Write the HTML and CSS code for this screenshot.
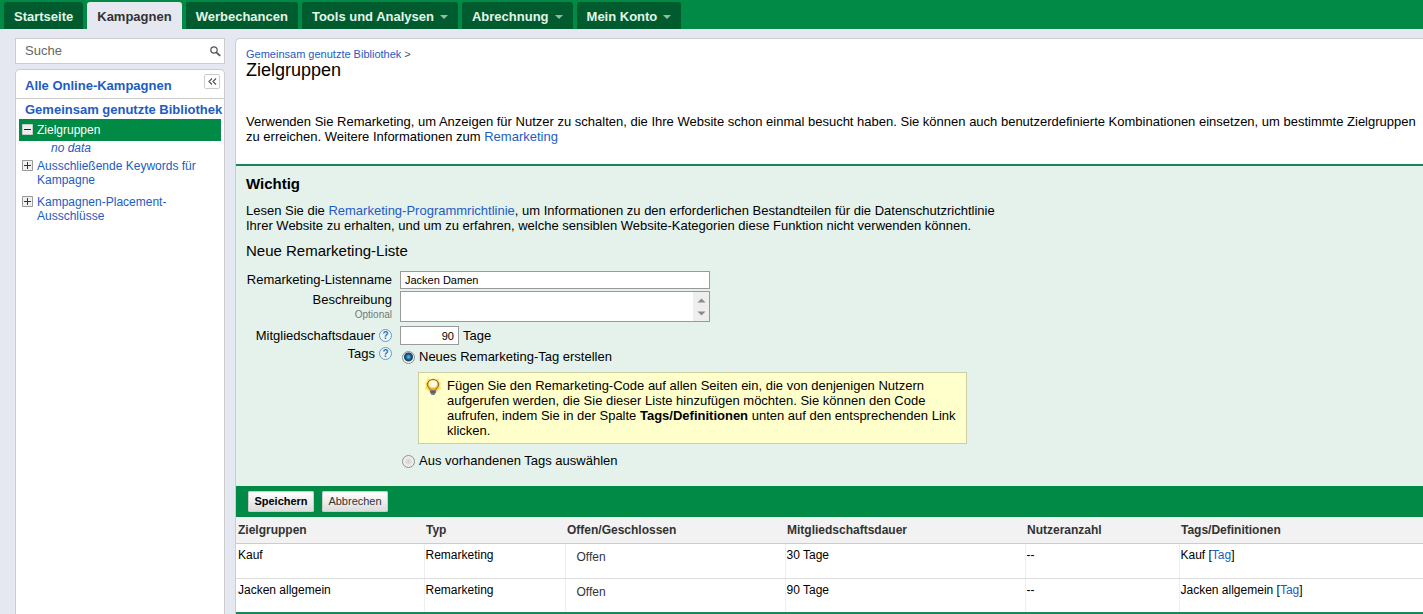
FILE: index.html
```
<!DOCTYPE html>
<html lang="de">
<head>
  <meta charset="UTF-8">
  <meta name="viewport" content="width=device-width, initial-scale=1.0">
  <title>Zielgruppen</title>
  <link rel="stylesheet" href="styles.css">
</head>
<body>
  <nav class="topnav">
    <a href="#" class="tab">Startseite</a>
    <a href="#" class="tab active">Kampagnen</a>
    <a href="#" class="tab">Werbechancen</a>
    <a href="#" class="tab menu">Tools und Analysen</a>
    <a href="#" class="tab menu">Abrechnung</a>
    <a href="#" class="tab menu">Mein Konto</a>
  </nav>

  <div class="page">
    <aside class="sidebar">
      <form class="search">
        <input type="text" placeholder="Suche" aria-label="Suche">
        <button type="button" aria-label="Suchen">
          <svg width="11" height="11" viewBox="0 0 11 11">
            <circle cx="4" cy="4" r="3.200" fill="none" stroke="#555" stroke-width="1.200"/>
            <path d="M6.300 6.300L10.200 9.800" stroke="#555" stroke-width="1.800"/>
          </svg>
        </button>
      </form>

      <div class="tree">
        <div class="tree-head">
          <a href="#">Alle Online-Kampagnen</a>
          <button type="button" class="collapse" aria-label="Einklappen">
            <svg width="9" height="7" viewBox="0 0 9 7">
              <path d="M4 0.500L1 3.500L4 6.500M8 0.500L5 3.500L8 6.500" fill="none" stroke="#555" stroke-width="1.200"/>
            </svg>
          </button>
        </div>
        <a href="#" class="tree-title">Gemeinsam genutzte Bibliothek</a>
        <ul>
          <li class="selected">
            <svg class="box" width="11" height="11" viewBox="0 0 11 11">
              <path d="M0.500 0.500H10.500V10.500H0.500Z" fill="#eee" stroke="#c4cfc8"/>
              <path d="M2 5.500H9" stroke="#222"/>
            </svg>
            <a href="#">Zielgruppen</a>
          </li>
          <li class="empty">no data</li>
          <li class="first">
            <svg class="box" width="11" height="11" viewBox="0 0 11 11">
              <path d="M0.500 0.500H10.500V10.500H0.500Z" fill="#f0f0f0" stroke="#999"/>
              <path d="M2 5.500H9M5.500 2V9" stroke="#333"/>
            </svg>
            <a href="#">Ausschließende Keywords für Kampagne</a>
          </li>
          <li>
            <svg class="box" width="11" height="11" viewBox="0 0 11 11">
              <path d="M0.500 0.500H10.500V10.500H0.500Z" fill="#f0f0f0" stroke="#999"/>
              <path d="M2 5.500H9M5.500 2V9" stroke="#333"/>
            </svg>
            <a href="#">Kampagnen-Placement-<br>Ausschlüsse</a>
          </li>
        </ul>
      </div>
    </aside>

    <main class="content">
      <header class="intro">
        <div class="breadcrumb"><a href="#">Gemeinsam genutzte Bibliothek</a> &gt;</div>
        <h1>Zielgruppen</h1>
        <p>Verwenden Sie Remarketing, um Anzeigen für Nutzer zu schalten, die Ihre Website schon einmal besucht haben. Sie können auch benutzerdefinierte Kombinationen einsetzen, um bestimmte Zielgruppen zu erreichen. Weitere Informationen zum <a href="#">Remarketing</a></p>
      </header>

      <form>
        <section class="new-list">
          <h2>Wichtig</h2>
          <p>Lesen Sie die <a href="#">Remarketing-Programmrichtlinie</a>, um Informationen zu den erforderlichen Bestandteilen für die Datenschutzrichtlinie Ihrer Website zu erhalten, und um zu erfahren, welche sensiblen Website-Kategorien diese Funktion nicht verwenden können.</p>
          <h3>Neue Remarketing-Liste</h3>

          <div class="fields">
            <label for="listname">Remarketing-Listenname</label>
            <input type="text" id="listname" value="Jacken Damen">

            <label for="description">Beschreibung<small>Optional</small></label>
            <div class="textbox">
              <textarea id="description"></textarea>
              <span class="scroller">
                <svg width="9" height="5" viewBox="0 0 9 5"><path d="M0.500 4.500L4.500 0.500L8.500 4.500Z" fill="#8a8a8a"/></svg>
                <svg width="9" height="5" viewBox="0 0 9 5"><path d="M0.500 0.500L4.500 4.500L8.500 0.500Z" fill="#8a8a8a"/></svg>
              </span>
            </div>

            <div class="label">
              <label for="duration">Mitgliedschaftsdauer</label>
              <button type="button" class="help">?</button>
            </div>
            <div class="duration"><input type="text" id="duration" value="90"> <span>Tage</span></div>

            <div class="label tags">
              <span>Tags</span>
              <button type="button" class="help">?</button>
            </div>
            <div class="options">
              <label><input type="radio" name="tag" checked>Neues Remarketing-Tag erstellen</label>
              <div class="hint">
                <svg width="16" height="18" viewBox="0 0 16 18">
                  <path d="M8 0L10 1.500L13.500 0.500L14 3.500L16 5L15 8L16 11L13 12L12 14H4L3 12L0 11L1 8L0 5L2 3.500L2.500 0.500L6 1.500Z" fill="#f8dc6c"/>
                  <path d="M8 1.500C4.500 1.500 2.300 3.900 2.300 6.700C2.300 9.300 4.800 10.200 5.300 12.500H10.700C11.200 10.200 13.700 9.300 13.700 6.700C13.700 3.900 11.500 1.500 8 1.500Z" fill="#f2b01c" stroke="#9a6a18"/>
                  <ellipse cx="8" cy="6" rx="4.200" ry="3.700" fill="#fffbe6"/>
                  <path d="M5.300 12.200H10.700V15L9.300 17H6.700L5.300 15Z" fill="#777a86"/>
                  <path d="M5.300 14H10.700" stroke="#444"/>
                </svg>
                <p>Fügen Sie den Remarketing-Code auf allen Seiten ein, die von denjenigen Nutzern aufgerufen werden, die Sie dieser Liste hinzufügen möchten. Sie können den Code aufrufen, indem Sie in der Spalte <b>Tags/Definitionen</b> unten auf den entsprechenden Link klicken.</p>
              </div>
              <label><input type="radio" name="tag">Aus vorhandenen Tags auswählen</label>
            </div>
          </div>
        </section>

        <div class="actions">
          <button type="button" class="save">Speichern</button>
          <button type="button">Abbrechen</button>
        </div>
      </form>

      <table class="lists">
        <thead>
          <tr>
            <th class="c-name">Zielgruppen</th>
            <th class="c-type">Typ</th>
            <th class="c-open">Offen/Geschlossen</th>
            <th class="c-duration">Mitgliedschaftsdauer</th>
            <th class="c-users">Nutzeranzahl</th>
            <th>Tags/Definitionen</th>
          </tr>
        </thead>
        <tbody>
          <tr>
            <td>Kauf</td>
            <td>Remarketing</td>
            <td class="state">Offen</td>
            <td>30 Tage</td>
            <td>--</td>
            <td>Kauf [<a href="#">Tag</a>]</td>
          </tr>
          <tr>
            <td>Jacken allgemein</td>
            <td>Remarketing</td>
            <td class="state">Offen</td>
            <td>90 Tage</td>
            <td>--</td>
            <td>Jacken allgemein [<a href="#">Tag</a>]</td>
          </tr>
        </tbody>
      </table>
    </main>
  </div>
</body>
</html>
```
FILE: styles.css
```
* {
  box-sizing: border-box;
}
body {
  margin: 0;
  background-color: #e5e8f0;
  color: #000;
  font-family: Arial, "Liberation Sans", sans-serif;
  font-size: 13px;
  line-height: 15px;
}
h1, h2, h3, p, ul {
  margin: 0;
  padding: 0;
}
a {
  color: #1c5cc4;
  text-decoration: none;
}
button, input, textarea {
  font-family: inherit;
  margin: 0;
}

/* top navigation */
.topnav {
  display: flex;
  gap: 4px;
  padding: 2px 4px 0;
  background-color: #008a45;
}
.tab {
  height: 27px;
  padding: 0 10px;
  border-radius: 3px 3px 0 0;
  background-color: #005c2e;
  color: #e2f5e9;
  font-weight: bold;
  line-height: 29px;
}
.tab.active {
  background-color: #e5e8f0;
  color: #333;
}
.tab.menu::after {
  content: "";
  display: inline-block;
  margin-left: 6px;
  border: 4px solid transparent;
  border-top-color: #8fbfa2;
  border-bottom: 0;
  vertical-align: 2px;
}

.page {
  display: flex;
  gap: 10px;
  padding: 9px 0 0 15px;
}

/* sidebar */
.sidebar {
  display: flex;
  flex-direction: column;
  gap: 5px;
  width: 210px;
  flex: none;
}
.search {
  display: flex;
  align-items: center;
  height: 26px;
  border: 1px solid #ccc;
  background-color: #fff;
}
.search input {
  flex: 1;
  min-width: 0;
  padding: 0 9px 2px;
  border: 0;
  background: none;
  font-size: 13px;
}
.search input::placeholder {
  color: #666;
}
.search button {
  display: flex;
  padding: 0 3px;
  border: 0;
  background: none;
}
.tree {
  flex: 1;
  border: 1px solid #ccc;
  border-bottom: 0;
  border-radius: 5px 5px 0 0;
  background-color: #fff;
}
.tree-head {
  display: flex;
  justify-content: space-between;
  height: 29px;
  padding: 4px 4px 0 9px;
  border-bottom: 1px solid #ccc;
  font-weight: bold;
}
.tree-head a {
  line-height: 24px;
}
.collapse {
  display: flex;
  align-items: center;
  justify-content: center;
  width: 16px;
  height: 15px;
  padding: 0;
  border: 1px solid #ccc;
  border-radius: 2px;
  background-color: #fff;
}
.tree-title {
  display: block;
  height: 20px;
  padding-left: 9px;
  font-weight: bold;
  line-height: 22px;
  white-space: nowrap;
}
.tree ul {
  padding: 0 3px;
  list-style: none;
  font-size: 12px;
  line-height: 14px;
}
.tree li {
  display: flex;
  gap: 4px;
  padding: 0 20px 8px 3px;
}
.tree .box {
  flex: none;
  margin-top: 1px;
}
.tree .selected {
  padding: 4px 3px;
  background-color: #008a45;
}
.tree .selected a {
  color: #fff;
}
.tree .empty {
  padding: 0 32px;
  color: #1c5cc4;
  font-style: italic;
}
.tree .first {
  padding-top: 4px;
}

/* content */
.content {
  flex: 1;
  min-width: 0;
  border: 1px solid #ccc;
  border-right: 0;
  border-bottom: 0;
  border-radius: 5px 0 0 0;
  background-color: #fff;
}
.intro {
  padding: 8px 4px 20px 10px;
  border-bottom: 2px solid #178556;
}
.breadcrumb {
  color: #555;
  font-size: 11px;
  line-height: 14px;
}
.intro h1 {
  margin-bottom: 35px;
  font-size: 18px;
  font-weight: normal;
  line-height: 18px;
}
.new-list {
  padding: 9px 10px 16px;
  background-color: #e4f2eb;
}
.new-list h2 {
  margin-bottom: 11px;
  font-size: 15px;
  line-height: 17px;
}
.new-list > p {
  max-width: 760px;
}
.new-list h3 {
  margin: 9px 0 12px;
  font-size: 15px;
  font-weight: normal;
  line-height: 17px;
}
.fields {
  display: grid;
  grid-template-columns: 146px minmax(0, 1fr);
  column-gap: 8px;
  row-gap: 2px;
}
.fields > label, .label {
  text-align: right;
}
.fields > label {
  padding-top: 1px;
}
.fields small {
  display: block;
  color: #777;
  font-size: 10px;
}
.fields input[type="text"], .textbox {
  max-width: 310px;
  border: 1px solid #999;
  background-color: #fff;
  font-size: 11px;
}
.fields input[type="text"] {
  height: 18px;
  padding: 0 4px;
}
.textbox {
  display: flex;
  height: 31px;
}
.textbox textarea {
  flex: 1;
  min-width: 0;
  padding: 2px 4px;
  border: 0;
  background: none;
  resize: none;
  font-size: 11px;
}
.scroller {
  display: flex;
  flex-direction: column;
  align-items: center;
  justify-content: space-between;
  width: 16px;
  padding: 6px 0 5px;
  background-color: #eee;
}
.label {
  display: flex;
  justify-content: flex-end;
  align-items: center;
  gap: 4px;
  padding-top: 2px;
}
.help {
  width: 13px;
  height: 13px;
  padding: 0;
  border: 1px solid #6a9cba;
  border-radius: 50%;
  background-color: #eaf5fc;
  color: #3573a3;
  font-size: 10px;
  font-weight: bold;
  line-height: 11px;
}
.duration {
  display: flex;
  align-items: center;
  gap: 4px;
  padding-top: 2px;
}
.fields .duration input {
  width: 59px;
  height: 19px;
  text-align: right;
}
.tags {
  height: 13px;
  padding-top: 0;
}
.options {
  padding: 1px 0 0 2px;
}
.options label {
  display: flex;
  align-items: center;
  gap: 4px;
  line-height: 18px;
}
.options input {
  appearance: none;
  width: 13px;
  height: 13px;
  border: 1px solid #8e8f8f;
  border-radius: 50%;
  background: radial-gradient(#d0d0d0, #f4f4f4 70%);
}
.options input:checked {
  background: radial-gradient(circle at 50% 45%, #6cc3ea 0, #17517f 3px, #16456b 4px, #f4f4f4 5px);
}
.hint {
  display: flex;
  gap: 6px;
  max-width: 549px;
  margin: 6px 0 8px 16px;
  padding: 5px 10px 5px 6px;
  border: 1px solid #cccfa0;
  background-color: #ffffcc;
}
.hint svg {
  flex: none;
}

/* buttons */
.actions {
  display: flex;
  gap: 8px;
  padding: 5px 12px;
  background-color: #008a45;
}
.actions button {
  width: 66px;
  height: 21px;
  padding: 0 0 2px;
  border: 1px solid #ccc;
  border-radius: 1px;
  background: linear-gradient(#fff, #dcdcdc);
  color: #333;
  font-size: 11px;
}
.actions .save {
  color: #000;
  font-weight: bold;
}

/* list table */
.lists {
  width: 100%;
  border-collapse: collapse;
  border-bottom: 2px solid #178556;
  table-layout: fixed;
  font-size: 12px;
  line-height: 14px;
}
.lists th {
  height: 26px;
  padding: 0 2px;
  border-bottom: 1px solid #ccc;
  background-color: #f2f2f2;
  color: #333;
  text-align: left;
}
.lists td {
  height: 35px;
  padding: 4px 1px;
  border-left: 1px solid #eee;
  border-bottom: 1px solid #ddd;
  vertical-align: top;
}
.lists td:first-child {
  padding-left: 2px;
  border-left: 0;
}
.lists .state {
  padding: 6px 11px;
  color: #333;
}
.c-name {
  width: 188px;
}
.c-type {
  width: 141px;
}
.c-open {
  width: 220px;
}
.c-duration {
  width: 240px;
}
.c-users {
  width: 154px;
}
```
